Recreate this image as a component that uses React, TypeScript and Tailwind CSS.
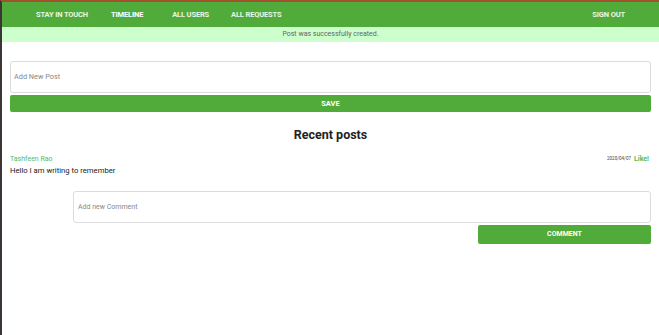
export default function App() {
  return (
    <div className="flex h-[335px] w-[659px] flex-col overflow-hidden border-l-2 border-t-2 border-l-[#3b3634] border-t-[#a0522d] bg-white font-['Roboto',sans-serif]">
      {/* Navbar */}
      <nav className="flex h-[25px] shrink-0 items-center bg-[#50ab3a] text-[7.5px] font-bold uppercase tracking-[-0.15px] text-[#eaf6e4]">
        <a className="ml-[34px]">Stay in touch</a>
        <a className="ml-[23px] text-white">Timeline</a>
        <a className="ml-[29px]">All users</a>
        <a className="ml-[22px]">All requests</a>
        <a className="ml-auto mr-[34px]">Sign out</a>
      </nav>

      {/* Flash */}
      <div className="flex h-[15px] shrink-0 items-center justify-center bg-[#ccffcc] text-[7px] text-[#666]">
        Post was successfully created.
      </div>

      <div className="flex flex-col px-[8px]">
        {/* New post form */}
        <div className="mt-[19px] flex h-[32px] items-center rounded-[3px] border border-[#dcdcdc] px-[3px] text-[7.3px] text-[#888]">
          Add New Post
        </div>
        <button className="mt-[2px] h-[17px] rounded-[2px] bg-[#50ab3a] text-[7.5px] font-bold text-white">
          SAVE
        </button>

        <h2 className="mt-[14px] text-center text-[12.5px] font-bold leading-[18px] text-[#222]">
          Recent posts
        </h2>

        {/* Post */}
        <div className="mt-[10px] flex items-center justify-between">
          <span className="text-[7px] text-[#5cb85c]">Tashfeen Rao</span>
          <span className="flex items-center gap-[3px] pr-[2px]">
            <span className="text-[4.5px] text-[#444]">2020/04/07</span>
            <span className="text-[7px] font-bold text-[#5cb85c]">Like!</span>
          </span>
        </div>
        <p className="text-[7.7px] text-[#222]">Hello I am writing to remember</p>

        {/* Comment form */}
        <div className="ml-[63px] mt-[15px] flex h-[32px] items-center rounded-[3px] border border-[#dcdcdc] px-[4px] text-[7px] text-[#888]">
          Add new Comment
        </div>
        <div className="flex justify-end">
          <button className="mt-[2px] h-[19px] w-[173px] rounded-[2px] bg-[#50ab3a] text-[7px] font-bold text-white">
            COMMENT
          </button>
        </div>
      </div>
    </div>
  );
}
